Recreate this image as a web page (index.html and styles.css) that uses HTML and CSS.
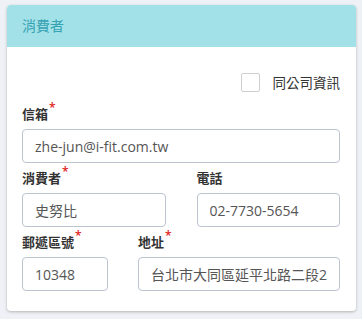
FILE: index.html
```html
<!DOCTYPE html>
<html lang="zh-Hant">
<head>
  <meta charset="UTF-8" />
  <meta name="viewport" content="width=device-width, initial-scale=1.0"/>
  <title>消費者</title>
  <link rel="stylesheet" href="styles.css">
</head>
<body>

<div class="card">
  <div class="card-header">消費者</div>
  <div class="card-body">
    <label class="same-company">
      <input type="checkbox">
      <span>同公司資訊</span>
    </label>

    <div class="field">
      <div class="field-label required">信箱</div>
      <input class="form-input" type="text" value="zhe-jun@i-fit.com.tw">
    </div>

    <div class="row half">
      <div class="field">
        <div class="field-label required">消費者</div>
        <input class="form-input" type="text" value="史努比">
      </div>
      <div class="field">
        <div class="field-label">電話</div>
        <input class="form-input" type="text" value="02-7730-5654">
      </div>
    </div>

    <div class="row third last">
      <div class="field">
        <div class="field-label required">郵遞區號</div>
        <input class="form-input" type="text" value="10348">
      </div>
      <div class="field">
        <div class="field-label required">地址</div>
        <input class="form-input" type="text" value="台北市大同區延平北路二段2號">
      </div>
    </div>
  </div>
</div>

</body>
</html>
```

FILE: styles.css
```css
* { box-sizing: border-box; }
body {
  margin: 0;
  padding: 5px 6px 10px 7px;
  background: #eef1f5;
  font-family: 'Open Sans', 'Noto Sans CJK TC', sans-serif;
  color: #333;
}
.card {
  background: #fff;
  border-radius: 4px;
  box-shadow: 0 1px 3px rgba(0, 0, 0, 0.25);
  overflow: hidden;
}
.card-header {
  height: 42px;
  line-height: 42px;
  padding: 0 15px;
  background: #a2e1e8;
  color: #36a3b3;
  font-size: 14px;
}
.card-body {
  padding: 25px 16px 20px 15px;
}
.same-company {
  display: flex;
  align-items: center;
  justify-content: flex-end;
  gap: 13px;
  font-size: 13.5px;
  color: #333;
  margin-bottom: 13px;
}
.same-company input {
  appearance: none;
  margin: 0;
  width: 19px;
  height: 19px;
  border: 1px solid #cfcfcf;
  border-radius: 2px;
  background: #fff;
}
.field-label {
  font-size: 13px;
  font-weight: 600;
  color: #333;
  line-height: 18px;
  margin-bottom: 6px;
}
.field-label.required::after {
  content: '*';
  color: #e02020;
  font-size: 12px;
  vertical-align: top;
  position: relative;
  top: -6px;
  margin-left: 1px;
}
.form-input {
  display: block;
  width: 100%;
  height: 34px;
  padding: 0 12px;
  border: 1px solid #bcc4d0;
  border-radius: 4px;
  font-family: 'Open Sans', 'Noto Sans CJK TC', sans-serif;
  font-size: 14px;
  color: #555;
  background: #fff;
  margin-bottom: 6px;
}
.row {
  display: grid;
  column-gap: 31px;
}
.row.half { grid-template-columns: 1fr 1fr; }
.row.third { grid-template-columns: 86px 1fr; column-gap: 30px; }
.row.last .form-input { margin-bottom: 0; }
```
